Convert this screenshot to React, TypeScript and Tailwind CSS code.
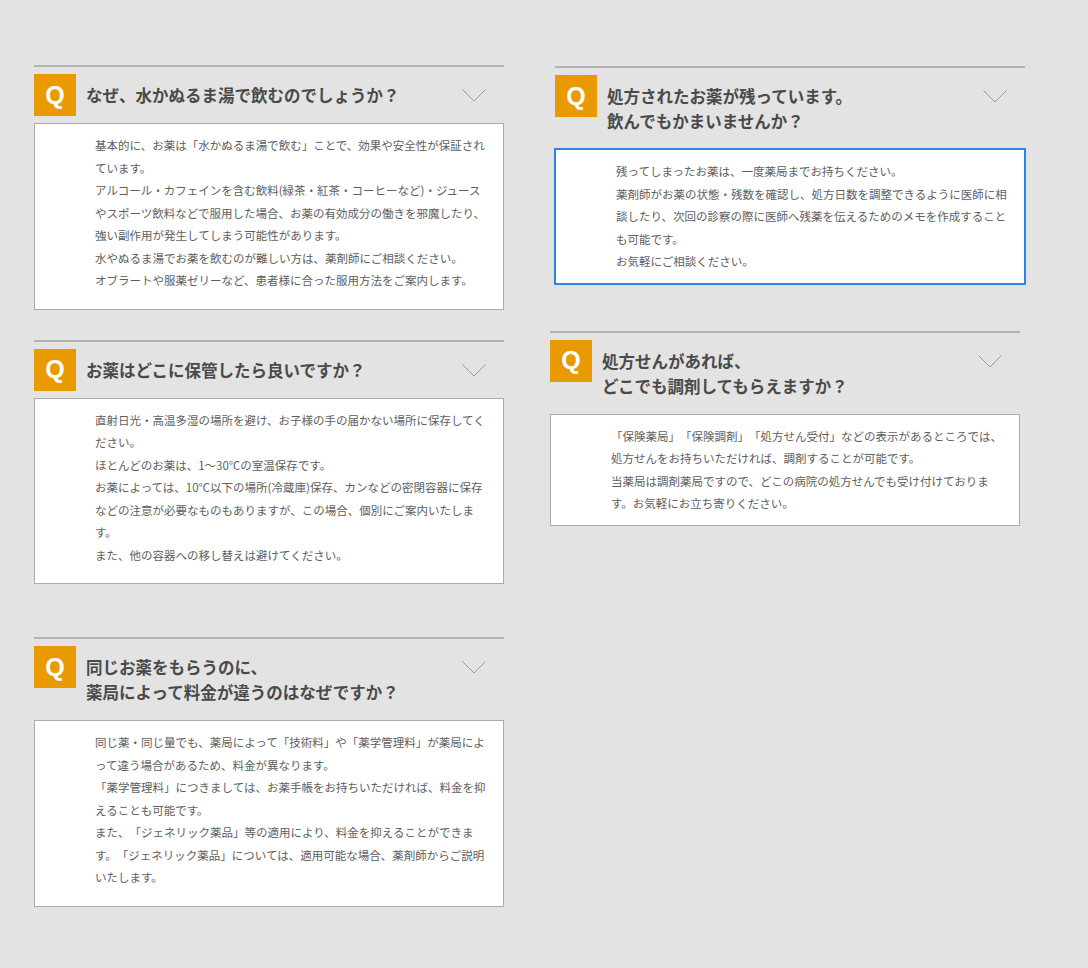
import React from 'react';

interface Faq {
  id: string;
  title: string[];
  body: string[];
  active?: boolean;
}

const leftFaqs: Faq[] = [
  {
    id: 'water',
    title: ['なぜ、水かぬるま湯で飲むのでしょうか？'],
    body: [
      '基本的に、お薬は「水かぬるま湯で飲む」ことで、効果や安全性が保証されています。',
      'アルコール・カフェインを含む飲料(緑茶・紅茶・コーヒーなど)・ジュースやスポーツ飲料などで服用した場合、お薬の有効成分の働きを邪魔したり、強い副作用が発生してしまう可能性があります。',
      '水やぬるま湯でお薬を飲むのが難しい方は、薬剤師にご相談ください。',
      'オブラートや服薬ゼリーなど、患者様に合った服用方法をご案内します。',
    ],
  },
  {
    id: 'storage',
    title: ['お薬はどこに保管したら良いですか？'],
    body: [
      '直射日光・高温多湿の場所を避け、お子様の手の届かない場所に保存してください。',
      'ほとんどのお薬は、1〜30℃の室温保存です。',
      'お薬によっては、10℃以下の場所(冷蔵庫)保存、カンなどの密閉容器に保存などの注意が必要なものもありますが、この場合、個別にご案内いたします。',
      'また、他の容器への移し替えは避けてください。',
    ],
  },
  {
    id: 'price',
    title: ['同じお薬をもらうのに、', '薬局によって料金が違うのはなぜですか？'],
    body: [
      '同じ薬・同じ量でも、薬局によって「技術料」や「薬学管理料」が薬局によって違う場合があるため、料金が異なります。',
      '「薬学管理料」につきましては、お薬手帳をお持ちいただければ、料金を抑えることも可能です。',
      'また、「ジェネリック薬品」等の適用により、料金を抑えることができます。「ジェネリック薬品」については、適用可能な場合、薬剤師からご説明いたします。',
    ],
  },
];

const rightFaqs: Faq[] = [
  {
    id: 'leftover',
    title: ['処方されたお薬が残っています。', '飲んでもかまいませんか？'],
    active: true,
    body: [
      '残ってしまったお薬は、一度薬局までお持ちください。',
      '薬剤師がお薬の状態・残数を確認し、処方日数を調整できるように医師に相談したり、次回の診察の際に医師へ残薬を伝えるためのメモを作成することも可能です。',
      'お気軽にご相談ください。',
    ],
  },
  {
    id: 'anywhere',
    title: ['処方せんがあれば、', 'どこでも調剤してもらえますか？'],
    body: [
      '「保険薬局」「保険調剤」「処方せん受付」などの表示があるところでは、処方せんをお持ちいただければ、調剤することが可能です。',
      '当薬局は調剤薬局ですので、どこの病院の処方せんでも受け付けております。お気軽にお立ち寄りください。',
    ],
  },
];

function Chevron() {
  return (
    <svg width="24" height="13" viewBox="0 0 24 13" className="shrink-0" fill="none">
      <path d="M0.5 0.5 L12 12 L23.5 0.5" stroke="#9a9a9a" strokeWidth="1" />
    </svg>
  );
}

function FaqItem({ faq, className, compact }: { faq: Faq; className?: string; compact?: boolean }) {
  return (
    <div className={`w-[470px] border-t-2 border-[#b4b4b4] pt-[7px] ${className ?? ''}`}>
      <div className="flex items-start">
        <div className="w-[42px] h-[42px] shrink-0 bg-[#e99a00] flex items-center justify-center text-white text-[25px] font-bold font-['Liberation_Sans',sans-serif] leading-none">
          Q
        </div>
        <h3 className="ml-[10px] pt-[9px] pb-[8px] flex-1 text-[16.5px] leading-[25px] font-bold text-[#4a4a4a]">
          {faq.title.map((line, i) => (
            <span key={i} className="block">{line}</span>
          ))}
        </h3>
        <div className="mt-[15px] mr-[18px]">
          <Chevron />
        </div>
      </div>
      <div
        className={`mt-[7px] bg-white border pl-[60px] pr-[14px] pt-[10px] ${compact ? 'pb-[10px]' : 'pb-[17px]'} ${
          faq.active ? 'border-[#2b84ea] shadow-[0_0_0_1px_#2b84ea]' : 'border-[#ababab]'
        }`}
      >
        {faq.body.map((p, i) => (
          <p key={i} className="text-[11.5px] leading-[22.5px] text-[#5e5e5e] [text-spacing-trim:space-all]">
            {p}
          </p>
        ))}
      </div>
    </div>
  );
}

export default function App() {
  return (
    <div className="min-h-screen bg-[#e3e3e3] flex items-start pt-[65px] font-['Noto_Sans_CJK_JP','Noto_Sans',sans-serif]">
      <div className="ml-[34px] flex flex-col">
        <FaqItem faq={leftFaqs[0]} />
        <FaqItem faq={leftFaqs[1]} className="mt-[30px]" />
        <FaqItem faq={leftFaqs[2]} className="mt-[53px]" />
      </div>
      <div className="ml-[46px] pt-[1px] flex flex-col">
        <FaqItem faq={rightFaqs[0]} className="ml-[5px]" compact />
        <FaqItem faq={rightFaqs[1]} className="mt-[47px]" compact />
      </div>
    </div>
  );
}
